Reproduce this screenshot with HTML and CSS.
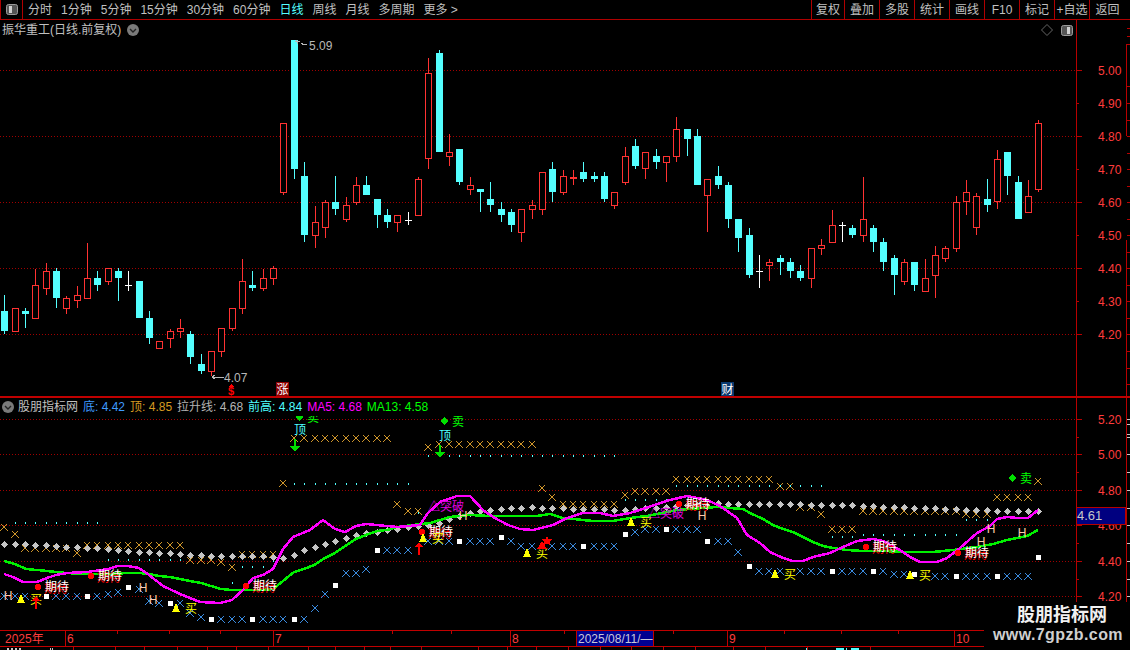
FILE: index.html
```html
<!DOCTYPE html>
<html lang="zh-CN">
<head>
<meta charset="utf-8">
<title>振华重工 K线</title>
<link rel="stylesheet" href="styles.css">
</head>
<body>
<div class="app">
  <header class="toolbar">
    <div class="panel-btn">
      <svg class="square-icon" viewBox="0 0 12 11"><rect class="si-frame" x="0.5" y="0.5" width="11" height="10" rx="2"/><rect class="si-bar" x="3" y="2" width="3" height="7"/></svg>
    </div>
    <nav class="periods">
      <span>分时</span><span>1分钟</span><span>5分钟</span><span>15分钟</span><span>30分钟</span><span>60分钟</span><span class="active">日线</span><span>周线</span><span>月线</span><span>多周期</span><span>更多 &gt;</span>
    </nav>
    <nav class="actions">
      <span class="first">复权</span><span>叠加</span><span>多股</span><span>统计</span><span>画线</span><span>F10</span><span>标记</span><span>+自选</span><span class="last">返回</span>
    </nav>
  </header>

  <section class="pane pane-main">
    <div class="plot">
      <div class="head head-main">
        <div class="title">
          <span>振华重工(日线.前复权)</span>
          <svg class="chev" viewBox="0 0 12 12"><circle class="chev-bg" cx="6" cy="6" r="6"/><path class="chev-line" d="M3 5l3 3 3-3"/></svg>
        </div>
        <div class="tools">
          <svg class="diamond-icon" viewBox="0 0 12 12"><path class="di-line" d="M6 .5L11.5 6 6 11.5 .5 6z"/></svg>
          <svg class="square-icon" viewBox="0 0 12 11"><rect class="si-frame" x="0.5" y="0.5" width="11" height="10" rx="2"/><rect class="si-bar" x="6" y="2" width="3" height="7"/></svg>
        </div>
      </div>
      <svg id="mainChart" class="chart chart-main" viewBox="0 37 1076 359"></svg>
    </div>
    <svg id="mainAxis" class="axis axis-main" viewBox="1076 20 54 376"></svg>
  </section>

  <section class="pane pane-sub">
    <div class="plot">
      <div class="head head-sub">
        <svg class="chev chev-sub" viewBox="0 0 12 12"><circle class="chev-bg" cx="6" cy="6" r="6"/><path class="chev-line" d="M3 5l3 3 3-3"/></svg>
        <span>股朋指标网</span>
        <span class="c-blue">底: 4.42</span>
        <span class="c-orange">顶: 4.85</span>
        <span class="c-grey">拉升线: 4.68</span>
        <span class="c-cyan">前高: 4.84</span>
        <span class="c-magenta">MA5: 4.68</span>
        <span class="c-green">MA13: 4.58</span>
      </div>
      <svg id="subChart" class="chart chart-sub" viewBox="0 416 1076 214"></svg>
    </div>
    <svg id="subAxis" class="axis axis-sub" viewBox="1076 398 54 232"></svg>
  </section>

  <svg id="dateAxis" class="dates" viewBox="0 630 1130 20"></svg>

  <aside class="watermark">
    <div class="wm-name">股朋指标网</div>
    <div class="wm-url">www.7gpzb.com</div>
  </aside>
</div>
<script src="chart.js"></script>
</body>
</html>
```
FILE: styles.css
```css
* { box-sizing: border-box; }
html, body { margin: 0; padding: 0; background: #000; }
body {
  width: 1130px;
  height: 650px;
  overflow: hidden;
  font: 12px/1 "Liberation Sans", "Noto Sans CJK SC", sans-serif;
  color: #c0c0c0;
}
.app {
  position: relative;
  display: flex;
  flex-direction: column;
  width: 1130px;
  height: 650px;
  overflow: hidden;
  background: #000;
}

/* toolbar */
.toolbar {
  display: flex;
  align-items: stretch;
  height: 20px;
  flex: none;
  border-bottom: 1px solid #b00000;
}
.panel-btn {
  width: 23px;
  display: flex;
  align-items: center;
  justify-content: center;
  border-left: 1px solid #b00000;
  border-right: 1px solid #b00000;
}
.square-icon { width: 12px; height: 11px; display: block; }
.si-frame { fill: #555; stroke: #9a9a9a; }
.si-bar { fill: #d0d0d0; }
.periods {
  display: flex;
  align-items: center;
  gap: 9px;
  padding-left: 5px;
  flex: 1;
}
.periods .active { color: #54ffff; }
.actions { display: flex; align-items: stretch; }
.actions span {
  width: 35px;
  display: flex;
  align-items: center;
  justify-content: center;
  border-left: 1px solid #b00000;
}
.actions .first { width: 33px; }
.actions .last { width: 41px; padding-right: 5px; }

/* panes */
.pane { display: flex; flex: none; }
.pane-main { height: 378px; border-bottom: 2px solid #c00000; }
.pane-sub { height: 232px; }
.plot { width: 1076px; display: flex; flex-direction: column; flex: none; }
.chart { display: block; width: 1076px; flex: none; shape-rendering: crispEdges; }
.chart-main { height: 359px; }
.chart-sub { height: 214px; }
.axis { display: block; width: 54px; flex: none; shape-rendering: crispEdges; }
.axis-main { height: 376px; }
.axis-sub { height: 232px; }

.head { display: flex; align-items: center; flex: none; }
.head-main { height: 17px; justify-content: space-between; padding: 3px 3px 0 2px; }
.head-sub { height: 18px; gap: 5px; padding: 0 0 0 2px; }
.title { display: flex; align-items: center; gap: 6px; }
.tools { display: flex; align-items: center; gap: 8px; }
.chev { width: 12px; height: 12px; display: block; flex: none; }
.chev-sub { margin-right: -1px; }
.chev-bg { fill: #7a7a7a; }
.chev-line { fill: none; stroke: #222; stroke-width: 1.4; }
.diamond-icon { width: 12px; height: 12px; display: block; }
.di-line { fill: none; stroke: #666; }
.c-blue { color: #3f9bff; }
.c-orange { color: #d69a20; }
.c-grey { color: #b4b4b4; }
.c-cyan { color: #4fffff; }
.c-magenta { color: #ff00ff; }
.c-green { color: #00ff00; }

.dates { display: block; width: 1130px; height: 20px; flex: none; shape-rendering: crispEdges; }

/* svg parts */
svg text { font-family: "Liberation Sans", "Noto Sans CJK SC", sans-serif; font-size: 12px; }
.grid { stroke: #a00000; stroke-width: 1; stroke-dasharray: 1 2; }
.up-body { fill: #000; stroke: #ff3232; stroke-width: 1; }
.up-wick { fill: #ff3232; }
.dn-body, .dn-wick { fill: #54ffff; }
.doji { fill: #fff; }
.ax-line { fill: #b80000; }
.ax-tick { fill: #b80000; }
.ax-tick-r { fill: #c9c9c9; }
.ax-label { fill: #ff3c3c; }
.ax-cur-bg { fill: #000080; stroke: #b80000; }
.ax-cur { fill: #c8c8c8; font-size: 13px; }
.note { fill: #b8b8b8; }
.note-line { stroke: #b8b8b8; fill: none; }
svg text.s-red { fill: #ff0000; font-weight: 700; font-size: 11px; }
.tag-red { fill: #8c0000; }
.tag-blue { fill: #0a3a70; }
.tag-text { fill: #fff; }
.x-orange { stroke: #d0962a; fill: none; }
.x-blue { stroke: #3a8be0; fill: none; }
.dot { fill: #4fffff; }
.dia { fill: #c4c4c4; }
.sq { fill: #fff; }
.ma5 { fill: none; stroke: #ff00ff; stroke-width: 2.5; }
.ma13 { fill: none; stroke: #00f000; stroke-width: 2.5; }
.red-mark { fill: #ff0000; }
.wait-red { fill: #ff0000; }
.wait { fill: #fff; }
.buy-tri { fill: #ffff00; }
.buy { fill: #ffff00; }
.sell { fill: #00ff00; }
.sell-mark { fill: #00e000; }
.top-txt { fill: #4fffff; }
.h-txt { fill: #ffc8a8; }
.break-txt { fill: #e000e0; }
.date-line { fill: #c00000; }
.date-label { fill: #ff3c3c; }
.date-cur-bg { fill: #000090; stroke: #c00000; }
.date-cur { fill: #c8c8d8; }
.tab-mark { fill: #c8c8c8; }
.tab-mark-c { fill: #4fffff; }

/* watermark sits over the chart corner */
.watermark {
  position: absolute;
  right: 0;
  bottom: 0;
  width: 146px;
  height: 48px;
  background: #000;
  text-align: center;
}
.wm-name {
  margin-top: 0;
  font: 700 18px/22px "Noto Sans CJK SC", sans-serif;
  color: #f0f0f0;
  padding-left: 10px;
}
.wm-url {
  margin-top: 2px;
  font: 700 16px/18px "Liberation Sans", sans-serif;
  letter-spacing: .4px;
  color: #cfcfcf;
  white-space: nowrap;
  padding-left: 2px;
}
```
FILE: chart.js
```js
(function () {
  var X = function (i) { return Math.round(4.3 + 10.34 * i); };

  // i order; [kind, wickTop, bodyTop, bodyBottom, wickLow]  kind: u=red hollow, d=cyan solid, w=white cross
  var K = [
    ['d',295,311,331,334],['u',308,308,332,332],['d',308,311,314,328],['u',269,285,319,319],
    ['u',263,271,289,295],['d',268,271,298,308],['u',296,298,309,314],['u',286,295,301,308],
    ['u',243,278,299,299],['d',271,278,285,291],['u',268,268,282,285],['d',268,271,278,301],
    ['w',271,285,285,291],['d',281,281,318,318],['d',311,318,338,344],['u',341,341,349,349],
    ['u',329,331,339,348],['u',319,328,332,338],['d',331,334,357,364],['d',354,364,371,374],
    ['u',351,351,372,376],['u',328,328,352,357],['u',308,308,329,331],['u',259,281,309,314],
    ['d',271,285,288,291],['u',269,278,289,291],['u',266,268,279,285],['u',123,123,193,195],
    ['d',40,40,169,179],['d',162,176,235,242],['u',206,222,236,248],['u',200,202,228,238],
    ['d',176,202,209,215],['u',197,205,220,222],['u',177,185,203,205],['d',176,185,195,195],
    ['d',199,199,215,228],['d',209,215,222,228],['u',215,215,223,232],['w',212,220,220,225],
    ['u',177,179,216,216],['u',58,73,159,169],['d',50,53,152,152],['u',134,152,157,166],
    ['d',149,149,182,185],['u',177,185,190,195],['d',189,189,192,212],['d',182,199,205,212],
    ['d',202,209,215,222],['d',209,212,225,232],['u',209,209,233,242],['u',200,205,210,219],
    ['u',172,172,210,215],['d',162,169,192,202],['u',170,176,193,195],['u',170,177,179,185],
    ['d',162,172,179,182],['d',172,176,179,182],['d',172,176,199,202],['u',192,192,206,209],
    ['u',147,156,183,185],['d',139,146,166,169],['u',152,152,169,179],['d',149,156,162,169],
    ['u',156,156,163,182],['u',117,129,157,162],['d',129,129,139,156],['d',129,136,185,185],
    ['u',179,179,196,232],['d',166,176,185,189],['d',182,185,219,228],['d',219,219,238,252],
    ['d',228,235,275,278],['w',255,271,271,288],['u',259,262,266,281],['d',255,258,262,275],
    ['d',258,262,271,278],['d',265,271,278,281],['u',248,248,279,288],['u',239,245,249,255],
    ['u',210,225,243,243],['w',222,225,225,242],['d',225,228,235,238],['u',177,219,236,242],
    ['d',225,228,242,252],['d',238,242,262,271],['d',255,258,275,295],['u',259,262,282,285],
    ['d',262,262,285,291],['u',259,278,292,292],['u',246,255,276,298],['u',246,248,259,262],
    ['u',196,202,249,252],['u',180,192,202,215],['u',193,196,228,235],['d',179,199,205,212],
    ['u',150,159,202,209],['d',152,152,176,195],['d',176,182,219,219],['u',180,196,213,213],
    ['u',120,123,190,192]
  ];

  var h = [];
  function rect(c, x, y, w, ht) { h.push('<rect class="' + c + '" x="' + x + '" y="' + y + '" width="' + w + '" height="' + ht + '"/>'); }
  function line(c, x1, y1, x2, y2) { h.push('<line class="' + c + '" x1="' + x1 + '" y1="' + y1 + '" x2="' + x2 + '" y2="' + y2 + '"/>'); }
  function text(c, x, y, s, anchor) { h.push('<text class="' + c + '" x="' + x + '" y="' + y + '"' + (anchor ? ' text-anchor="' + anchor + '"' : '') + '>' + s + '</text>'); }
  function poly(c, pts) { h.push('<polygon class="' + c + '" points="' + pts + '"/>'); }
  function pline(c, pts) { h.push('<polyline class="' + c + '" points="' + pts.map(function (p) { return p.join(','); }).join(' ') + '"/>'); }
  function flush(id) { document.getElementById(id).innerHTML = h.join(''); h = []; }

  /* ---------- main chart ---------- */
  [70.5, 136.5, 202.5, 268.5, 334.5].forEach(function (y) { line('grid', 0, y, 1076, y); });
  K.forEach(function (k, i) {
    var x = X(i), t = k[0];
    if (t === 'w') {
      rect('doji', x, k[1], 1, k[4] - k[1]);
      rect('doji', x - 3, k[2], 7, 1);
    } else if (t === 'u') {
      if (k[2] > k[1]) rect('up-wick', x, k[1], 1, k[2] - k[1]);
      if (k[4] > k[3]) rect('up-wick', x, k[3], 1, k[4] - k[3]);
      rect('up-body', x - 2.5, k[2] + 0.5, 6, k[3] - k[2] - 1);
    } else {
      rect('dn-wick', x, k[1], 1, k[4] - k[1]);
      rect('dn-body', x - 3, k[2], 7, k[3] - k[2]);
    }
  });
  // high / low notes
  h.push('<path class="note-line" d="M295 41h5M296 40l2 4M301 43l3 2 3-1"/>');
  text('note', 309, 50, '5.09');
  h.push('<path class="note-line" d="M212 377h12M212 377l3-2M212 377l3 2"/>');
  text('note', 224, 382, '4.07');
  // $ marker
  poly('red-mark', '231,384 228,387 234,387');
  text('s-red', 231, 395, '$', 'middle');
  rect('tag-red', 276, 382, 13, 14);
  text('tag-text', 276.5, 393.5, '涨');
  rect('tag-blue', 721, 382, 13, 14);
  text('tag-text', 721.5, 393.5, '财');
  flush('mainChart');

  /* ---------- main axis ---------- */
  rect('ax-line', 1076, 20, 1, 376);
  rect('ax-line', 1126, 44, 1, 92);
  rect('ax-line', 1126, 240, 1, 156);
  [[5, 70], [4.9, 103], [4.8, 136], [4.7, 169], [4.6, 202], [4.5, 235], [4.4, 268], [4.3, 301], [4.2, 334]].forEach(function (p, i) {
    rect('ax-tick', 1077, p[1], i % 2 ? 2 : 5, 1);
    text('ax-label', 1098, p[1] + 5, p[0].toFixed(2));
  });
  [28, 36, 44, 86, 103, 120, 136, 153, 169, 186, 202, 219, 235, 252, 268, 285, 301, 318, 334, 351, 368, 384].forEach(function (y) { rect('ax-tick', 1127, y, 3, 1); });
  flush('mainAxis');

  /* ---------- sub chart ---------- */
  [419.5, 454.5, 490.5, 525.5, 561, 596.5].forEach(function (y) { line('grid', 0, y, 1076, y); });

  function cross(c, i, y) {
    var x = X(i), yy = Math.round(y);
    h.push('<path class="' + c + '" d="M' + (x - 3) + ' ' + (yy - 3) + 'L' + (x + 4) + ' ' + (yy + 4) + 'M' + (x + 3) + ' ' + (yy - 3) + 'L' + (x - 4) + ' ' + (yy + 4) + '"/>');
  }
  var orange = [[0,0,527],[1,1,534],[2,6,548],[7,7,553],[8,17,545],[18,20,560],[21,21,562],[22,22,567],[23,26,554],[27,27,483],[28,37,438],[38,38,504],[39,40,511],[41,41,447],[42,51,444],[52,52,488],[53,53,497],[54,59,504],[60,60,495],[61,64,491],[65,74,479],[75,76,486],[77,78,507],[79,79,514],[80,82,529],[83,92,511],[93,95,514],[96,99,497],[100,100,481]];
  orange.forEach(function (r) { for (var i = r[0]; i <= r[1]; i++) cross('x-orange', i, r[2]); });

  var dots = [[1,9,522],[10,17,559],[22,22,582],[23,25,566],[26,26,560],[28,39,483],[40,40,512],[41,41,455],[43,59,455],[60,64,499],[65,79,485],[80,82,536],[83,92,534],[93,95,519]];
  dots.forEach(function (r) { for (var i = r[0]; i <= r[1]; i++) rect('dot', X(i), r[2], 1, 2); });

  // blue row: q = white square
  var blue = [[0,596],[1,596],[2,596],['q',4,596],[5,596],[6,596],[7,596],['q',8,596],[9,596],[10,594],[11,592],['q',12,587],[13,589],[14,601],[15,603],['q',16,603],[17,603],[18,613],[19,617],['q',20,619],[21,619],[22,619],[23,619],['q',24,619],[25,619],[26,619],[27,619],['q',28,619],[29,619],[30,608],[31,594],['q',32,585],[33,573],[34,573],[35,569],['q',36,550],[37,550],[38,550],[39,550],[41,541],[42,541],[43,541],['q',44,541],[45,541],[46,541],[47,541],['q',48,537],[49,541],[50,546],[51,546],['q',52,546],[53,546],[54,546],[55,546],['q',56,546],[57,546],[58,546],[59,546],['q',60,534],[61,532],[62,529],[63,529],['q',64,529],[65,529],[66,529],[67,529],['q',68,541],[69,541],[70,541],[71,552],['q',72,566],[73,571],[74,571],[75,571],[77,571],[78,571],[79,571],['q',80,571],[81,571],[82,571],[83,571],['q',84,571],[85,571],[86,574],[87,574],['q',88,574],[90,576],[91,576],['q',92,576],[93,576],[94,576],[95,576],['q',96,576],[97,576],[98,576],[99,576],['q',100,557]];
  var squares = [];
  blue.forEach(function (b) {
    if (b[0] === 'q') squares.push(b); else cross('x-blue', b[0], b[1]);
  });

  var dia = [544,544,544,545,545,546,547,547,548,548,549,550,551,552,552,553,553,554,555,555,556,556,556,556,556,556,557,558,555,550,547,544,541,538,535,533,532,530,529,527,526,525,523,519,516,513,511,510,509,508,508,507,508,508,508,509,509,509,509,510,510,509,508,508,507,506,505,505,506,503,504,504,504,504,504,504,504,504,505,505,505,505,505,506,506,507,507,507,508,508,508,509,509,510,510,510,511,511,511,511,511];
  dia.forEach(function (y, i) {
    var x = X(i) + 0.5, c = y + 0.5;
    poly('dia', x + ',' + (c - 3.5) + ' ' + (x + 3.5) + ',' + c + ' ' + x + ',' + (c + 3.5) + ' ' + (x - 3.5) + ',' + c);
  });
  squares.forEach(function (q) { rect('sq', X(q[1]) - 2, q[2] - 2, 5, 5); });

  pline('ma13', [[4,561],[15,564],[26,569],[37,570],[47,571],[56,572],[66,573],[87,574],[108,574],[128,573],[139,573],[149,574],[159,576],[170,577],[180,579],[190,581],[201,583],[211,586],[221,589],[232,590],[263,590],[273,589],[283,581],[294,572],[304,569],[314,565],[325,558],[335,553],[345,546],[356,539],[366,535],[377,531],[387,530],[397,527],[430,523],[450,517],[470,515],[490,516],[537,516],[550,514],[563,518],[573,519],[593,521],[613,521],[630,518],[647,516],[677,510],[703,508],[717,507],[743,509],[750,513],[763,519],[773,525],[783,529],[793,532],[803,537],[813,542],[823,546],[833,548],[847,550],[863,551],[883,551],[907,552],[933,552],[953,550],[977,547],[993,544],[1007,540],[1027,536],[1038,530]]);
  pline('ma5', [[4,574],[13,577],[23,582],[37,582],[47,578],[56,575],[67,573],[87,572],[108,569],[118,566],[128,566],[139,568],[149,575],[163,586],[180,594],[200,602],[220,603],[232,600],[243,590],[253,578],[263,575],[273,569],[283,549],[293,537],[310,530],[323,520],[335,529],[345,532],[356,526],[366,524],[387,526],[397,527],[420,525],[428,513],[440,502],[457,496],[470,496],[483,510],[493,517],[508,525],[520,529],[533,530],[553,525],[567,518],[583,513],[600,513],[613,516],[630,513],[670,500],[687,496],[707,500],[720,506],[737,518],[747,535],[760,543],[770,552],[783,558],[793,561],[803,561],[813,557],[830,553],[843,547],[857,541],[873,539],[883,541],[900,550],[910,557],[920,562],[937,562],[947,558],[960,548],[977,533],[990,526],[997,519],[1007,517],[1017,518],[1028,518],[1038,510]]);

  // 期待 labels
  [[38,587],[91,576],[246,586],[422,532],[679,504],[866,547],[958,553]].forEach(function (p) {
    h.push('<circle class="red-mark" cx="' + p[0] + '" cy="' + p[1] + '" r="3"/>');
    text('wait-red', p[0] + 6, p[1] + 6, '期待');
    text('wait', p[0] + 7, p[1] + 4, '期待');
  });
  // 买
  [[21,599],[176,608],[423,538],[527,553],[631,522],[775,574],[910,575]].forEach(function (p) {
    poly('buy-tri', p[0] + ',' + (p[1] - 5) + ' ' + (p[0] + 4) + ',' + (p[1] + 4) + ' ' + (p[0] - 4) + ',' + (p[1] + 4));
    text('buy', p[0] + 9, p[1] + 5, '买');
  });
  // red arrows and star
  h.push('<path class="red-mark" d="M36 596l4 5h-3v8h-2v-8h-3z"/>');
  h.push('<path class="red-mark" d="M419 542l4 5h-3v8h-2v-8h-3z"/>');
  poly('red-mark', '542,541 547,549 537,549');
  poly('red-mark', '547,536 548.5,539 552,539.5 549.5,542 550,545 547,543.5 544,545 544.5,542 542,539.5 545.5,539');
  // 卖
  [[299,417],[444,421],[1012,478]].forEach(function (p) {
    poly('sell-mark', p[0] + ',' + (p[1] - 4) + ' ' + (p[0] + 4) + ',' + p[1] + ' ' + p[0] + ',' + (p[1] + 4) + ' ' + (p[0] - 4) + ',' + p[1]);
    text('sell', p[0] + 8, p[1] + 5, '卖');
  });
  // 顶 + green arrow
  text('top-txt', 294, 434, '顶');
  text('top-txt', 439, 440, '顶');
  [[295,452],[440,458]].forEach(function (p) {
    rect('sell-mark', p[0] - 1, p[1] - 13, 2, 8);
    poly('sell-mark', p[0] + ',' + p[1] + ' ' + (p[0] + 5) + ',' + (p[1] - 6) + ' ' + (p[0] - 5) + ',' + (p[1] - 6));
  });
  // H
  [[8,596],[143,588],[153,600],[463,516],[702,516],[991,529],[981,542],[1022,533]].forEach(function (p) {
    text('h-txt', p[0], p[1] + 4, 'H', 'middle');
  });
  // 突破
  text('break-txt', 428, 511, '△突破');
  text('break-txt', 648, 518, '△突破');
  flush('subChart');

  /* ---------- sub axis ---------- */
  rect('ax-line', 1076, 398, 1, 232);
  rect('ax-line', 1126, 398, 1, 232);
  [[5.2, 419], [5.0, 454], [4.8, 490], [4.6, 525], [4.4, 561], [4.2, 596]].forEach(function (p) {
    rect('ax-tick', 1077, p[1], 5, 1);
    text('ax-label', 1098, p[1] + 5, p[0].toFixed(2));
  });
  [437, 472, 508, 543, 579, 614].forEach(function (y) { rect('ax-tick', 1077, y, 2, 1); });
  [419, 424, 434, 437, 454, 472, 490, 508, 525, 543, 561, 579, 596, 614].forEach(function (y) { rect('ax-tick-r', 1127, y, 3, 1); });
  h.push('<rect class="ax-cur-bg" x="1076.5" y="507.5" width="49" height="17"/>');
  text('ax-cur', 1077, 520, '4.61');
  flush('subAxis');

  /* ---------- date axis ---------- */
  rect('date-line', 0, 630, 1076, 1);
  rect('date-line', 0, 646, 1076, 1);
  [[5, '2025年'], [67, '6'], [275, '7'], [512, '8'], [729, '9'], [956, '10']].forEach(function (d, i) {
    if (i) rect('date-line', d[0] - 2, 630, 1, 16);
    text('date-label', d[0], 643, d[1]);
  });
  [117, 169, 220, 392, 451, 564, 673, 784, 841, 898].forEach(function (x) { rect('date-line', x, 631, 1, 3); });
  h.push('<rect class="date-cur-bg" x="576.5" y="630.5" width="77" height="16"/>');
  text('date-cur', 578, 643, '2025/08/11/—');
  [73, 115, 144, 177, 207, 236, 268, 308, 335, 364, 390, 421, 478, 507, 536, 568, 600, 631, 663, 695, 733, 765, 807, 870].forEach(function (x) { rect('date-line', x, 647, 1, 3); });
  [[7, 2], [11, 2], [15, 2], [19, 2], [50, 1], [52, 1]].forEach(function (m) { rect('tab-mark', m[0], 648, m[1], 2); });
  [[806, 1], [836, 8], [846, 1], [851, 8]].forEach(function (m) { rect('tab-mark-c', m[0], 648, m[1], 2); });
  flush('dateAxis');
})();
```
